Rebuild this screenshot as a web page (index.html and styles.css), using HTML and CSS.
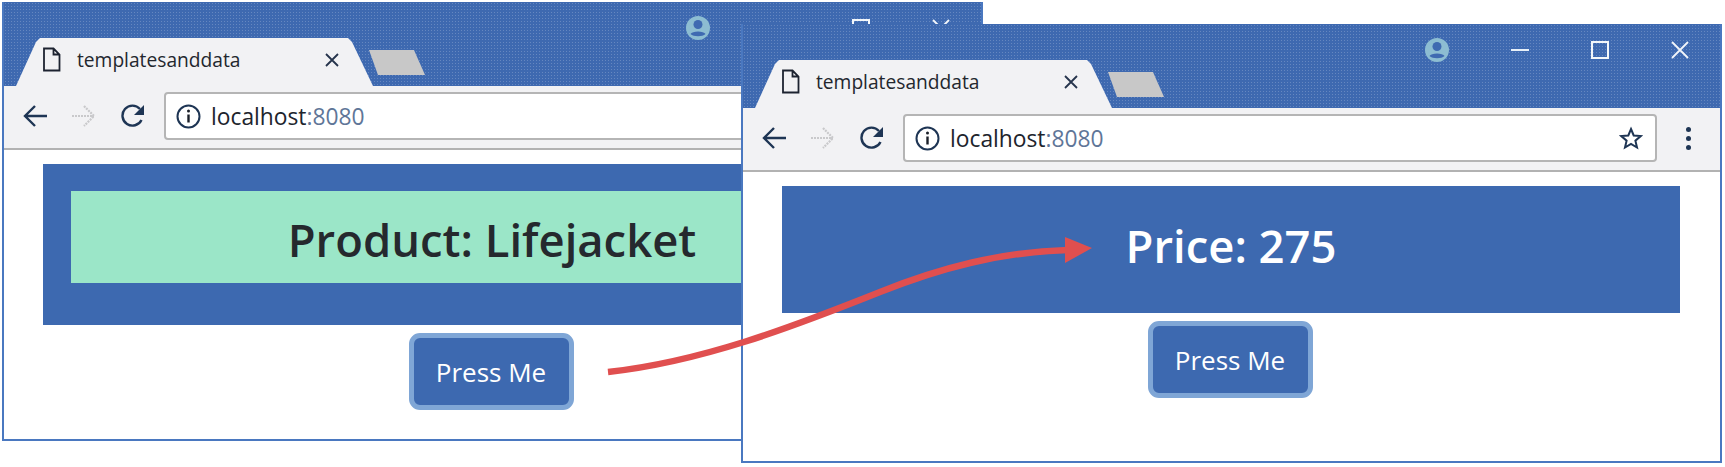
FILE: index.html
```html
<!DOCTYPE html>
<html>

<head>
    <title>templatesanddata</title>
    <link rel="stylesheet" href="styles.css">
</head>

<body>
    <div class="desktop">
        <!-- first window -->
        <div class="window window-back">
            <div class="titlebar">
                <div class="tab">
                    <svg class="tab-page" width="19" height="25" viewBox="0 0 19 25"><path d="M2 1.5h9.5l6 6v16H2z M11.5 1.5v6h6" fill="none" stroke="#1d2330" stroke-width="1.8"/></svg>
                    <span class="tab-title">templatesanddata</span>
                    <svg class="tab-close" width="14" height="14" viewBox="0 0 14 14"><path d="M1 1l12 12M13 1L1 13" stroke="#26344c" stroke-width="1.8"/></svg>
                </div>
                <div class="new-tab"></div>
                <div class="controls">
                    <svg width="24" height="24" viewBox="0 0 24 24"><circle cx="12" cy="12" r="12" fill="#8dbdd2"/><circle cx="12" cy="8.5" r="4.5" fill="#3f6ab1"/><path d="M4.5 18c1.5-3.5 13.500-3.500 15 0c-3 3-12 3-15 0z" fill="#3f6ab1"/></svg>
                    <svg class="ctl-min" width="18" height="18" viewBox="0 0 18 18"><path d="M0 9h18" stroke="#e8f0f8" stroke-width="2"/></svg>
                    <svg class="ctl-max" width="18" height="18" viewBox="0 0 18 18"><rect x="1" y="1" width="16" height="16" fill="none" stroke="#f2f6fa" stroke-width="2"/></svg>
                    <svg class="ctl-close" width="18" height="18" viewBox="0 0 18 18"><path d="M1 1l16 16M17 1L1 17" stroke="#f2f6fa" stroke-width="1.8"/></svg>
                </div>
            </div>
            <div class="toolbar">
                <svg class="nav-icon" width="24" height="24" viewBox="0 0 24 24"><path d="M24 12H2M12 2L2 12l10 10" fill="none" stroke="#1e3554" stroke-width="2.4"/></svg>
                <svg class="nav-icon" width="24" height="24" viewBox="0 0 24 24"><path d="M0 12h22M12 2l10 10-10 10" fill="none" stroke="#c9c9cb" stroke-width="2.2" stroke-dasharray="2 1"/></svg>
                <svg class="nav-icon" width="24" height="24" viewBox="0 0 24 24"><path d="M20.500 16A10 10 0 1 1 19 5" fill="none" stroke="#1e3554" stroke-width="2.400"/><path d="M23 1v10H13z" fill="#1e3554"/></svg>
                <div class="omnibox">
                    <svg width="25" height="25" viewBox="0 0 25 25"><circle cx="12.500" cy="12.500" r="11" fill="none" stroke="#1e3554" stroke-width="2"/><path d="M12.500 10.500v8" stroke="#1a1f28" stroke-width="2.400"/><circle cx="12.500" cy="7" r="1.500" fill="#1a1f28"/></svg>
                    <span class="url">localhost<span class="url-port">:8080</span></span>
                    <svg class="star" width="24" height="24" viewBox="0 0 24 24"><path d="M12 3l2.700 6.500 7 .6-5.300 4.600 1.600 6.800-6-3.600-6 3.600 1.600-6.800-5.300-4.600 7-.6z" fill="none" stroke="#1e3554" stroke-width="2"/></svg>
                </div>
                <div class="menu-dots"><i></i><i></i><i></i></div>
            </div>
            <div class="content">
                <div class="panel">
                    <div class="message message-product">Product: Lifejacket</div>
                </div>
                <button class="press">Press Me</button>
            </div>
        </div>

        <!-- second window, sits over the first -->
        <div class="window window-front">
            <div class="titlebar">
                <div class="tab">
                    <svg class="tab-page" width="19" height="25" viewBox="0 0 19 25"><path d="M2 1.5h9.5l6 6v16H2z M11.5 1.5v6h6" fill="none" stroke="#1d2330" stroke-width="1.8"/></svg>
                    <span class="tab-title">templatesanddata</span>
                    <svg class="tab-close" width="14" height="14" viewBox="0 0 14 14"><path d="M1 1l12 12M13 1L1 13" stroke="#26344c" stroke-width="1.8"/></svg>
                </div>
                <div class="new-tab"></div>
                <div class="controls">
                    <svg width="24" height="24" viewBox="0 0 24 24"><circle cx="12" cy="12" r="12" fill="#8dbdd2"/><circle cx="12" cy="8.5" r="4.5" fill="#3f6ab1"/><path d="M4.5 18c1.5-3.5 13.500-3.500 15 0c-3 3-12 3-15 0z" fill="#3f6ab1"/></svg>
                    <svg class="ctl-min" width="18" height="18" viewBox="0 0 18 18"><path d="M0 9h18" stroke="#e8f0f8" stroke-width="2"/></svg>
                    <svg class="ctl-max" width="18" height="18" viewBox="0 0 18 18"><rect x="1" y="1" width="16" height="16" fill="none" stroke="#f2f6fa" stroke-width="2"/></svg>
                    <svg class="ctl-close" width="18" height="18" viewBox="0 0 18 18"><path d="M1 1l16 16M17 1L1 17" stroke="#f2f6fa" stroke-width="1.8"/></svg>
                </div>
            </div>
            <div class="toolbar">
                <svg class="nav-icon" width="24" height="24" viewBox="0 0 24 24"><path d="M24 12H2M12 2L2 12l10 10" fill="none" stroke="#1e3554" stroke-width="2.4"/></svg>
                <svg class="nav-icon" width="24" height="24" viewBox="0 0 24 24"><path d="M0 12h22M12 2l10 10-10 10" fill="none" stroke="#c9c9cb" stroke-width="2.2" stroke-dasharray="2 1"/></svg>
                <svg class="nav-icon" width="24" height="24" viewBox="0 0 24 24"><path d="M20.500 16A10 10 0 1 1 19 5" fill="none" stroke="#1e3554" stroke-width="2.400"/><path d="M23 1v10H13z" fill="#1e3554"/></svg>
                <div class="omnibox">
                    <svg width="25" height="25" viewBox="0 0 25 25"><circle cx="12.500" cy="12.500" r="11" fill="none" stroke="#1e3554" stroke-width="2"/><path d="M12.500 10.500v8" stroke="#1a1f28" stroke-width="2.400"/><circle cx="12.500" cy="7" r="1.500" fill="#1a1f28"/></svg>
                    <span class="url">localhost<span class="url-port">:8080</span></span>
                    <svg class="star" width="24" height="24" viewBox="0 0 24 24"><path d="M12 3l2.700 6.500 7 .6-5.300 4.600 1.600 6.800-6-3.600-6 3.600 1.600-6.800-5.300-4.600 7-.6z" fill="none" stroke="#1e3554" stroke-width="2"/></svg>
                </div>
                <div class="menu-dots"><i></i><i></i><i></i></div>
            </div>
            <div class="content">
                <div class="panel panel-price">
                    <div class="message message-price">Price: 275</div>
                </div>
                <button class="press">Press Me</button>
            </div>
        </div>

        <svg class="arrow" width="1725" height="467" viewBox="0 0 1725 467">
            <path d="M608 372C700 362 790 328 880 292C940 268 1000 252 1068 250" fill="none" stroke="#e04f4f" stroke-width="6.500"/>
            <path d="M1065 237L1092 248L1065 263z" fill="#e04f4f"/>
        </svg>
    </div>
</body>

</html>
```

FILE: styles.css
```css
body {
    margin: 0;
    background-color: #fff;
    font-family: "Open Sans", "Noto Sans", sans-serif;
    overflow: hidden;
}

.desktop {
    position: relative;
    width: 1725px;
    height: 467px;
    overflow: hidden;
}

/* the two browser windows */
.window {
    position: absolute;
    box-sizing: border-box;
    width: 981px;
    height: 439px;
    border: 2px solid #4a78c0;
    border-top: 0;
    background-color: #fff;
    overflow: hidden;
}

.window-back {
    left: 2px;
    top: 2px;
}

.window-front {
    left: 741px;
    top: 24px;
}

.titlebar {
    display: flex;
    height: 84px;
    background-color: #3e69b0;
    background-image: radial-gradient(rgba(255, 255, 255, 0.2) 0.5px, transparent 0.7px);
    background-size: 3px 3px;
}

.tab {
    display: flex;
    align-items: center;
    box-sizing: border-box;
    width: 357px;
    height: 48px;
    margin-top: 36px;
    margin-left: 12px;
    padding: 0 0 5px 26px;
    background-color: #f2f2f4;
    clip-path: polygon(0 100%, 20px 4px, 24px 0, 332px 0, 336px 4px, 100% 100%);
}

.tab-title {
    margin-left: 16px;
    font-size: 19.2px;
    color: #23272e;
    white-space: nowrap;
}

.tab-close {
    margin-left: 85px;
}

.new-tab {
    width: 56px;
    height: 25px;
    margin-top: 48px;
    margin-left: -4px;
    background-color: #c8c8c8;
    clip-path: polygon(0 0, 45px 0, 100% 100%, 9px 100%);
}

.controls {
    display: flex;
    align-items: center;
    gap: 62px;
    height: 24px;
    margin-top: 14px;
    margin-left: auto;
    margin-right: 31px;
}

.toolbar {
    display: flex;
    align-items: center;
    gap: 25px;
    box-sizing: border-box;
    height: 64px;
    padding: 0 0 2px 19px;
    background-color: #f2f2f4;
    border-bottom: 2px solid #b2b2b2;
}

.omnibox {
    display: flex;
    align-items: center;
    box-sizing: border-box;
    width: 754px;
    height: 48px;
    margin-left: -6px;
    padding: 0 12px 0 10px;
    background-color: #fff;
    border: 2px solid #b5b5b5;
    border-radius: 4px;
}

.url {
    margin-left: 10px;
    font-size: 22.8px;
    color: #20242c;
}

.url-port {
    color: #5f7698;
}

.star {
    margin-left: auto;
}

.menu-dots {
    display: flex;
    flex-direction: column;
    gap: 4px;
    margin-left: 4px;
}

.menu-dots i {
    width: 5px;
    height: 5px;
    border-radius: 50%;
    background-color: #1e3554;
}

/* page inside the window */
.content {
    display: flex;
    flex-direction: column;
    align-items: center;
    padding: 14px 40px 0 39px;
}

.panel {
    box-sizing: border-box;
    width: 898px;
    padding: 27px 28px 42px;
    background-color: #3d69b0;
}

.panel-price {
    padding-bottom: 34px;
}

.message {
    font-size: 45.4px;
    font-weight: 600;
    line-height: 96px;
    height: 92px;
    text-align: center;
}

.message-product {
    background-color: #9be6c8;
    color: #25292e;
}

.message-price {
    height: 66px;
    line-height: 65px;
    color: #fff;
}

.press {
    box-sizing: border-box;
    width: 165px;
    height: 77px;
    margin-top: 8px;
    margin-right: 2px;
    background-color: #3d69b0;
    border: 5px solid #7fa6d6;
    border-radius: 11px;
    color: #fff;
    font-family: inherit;
    font-size: 26px;
}

.arrow {
    position: absolute;
    left: 0;
    top: 0;
    pointer-events: none;
}
```
